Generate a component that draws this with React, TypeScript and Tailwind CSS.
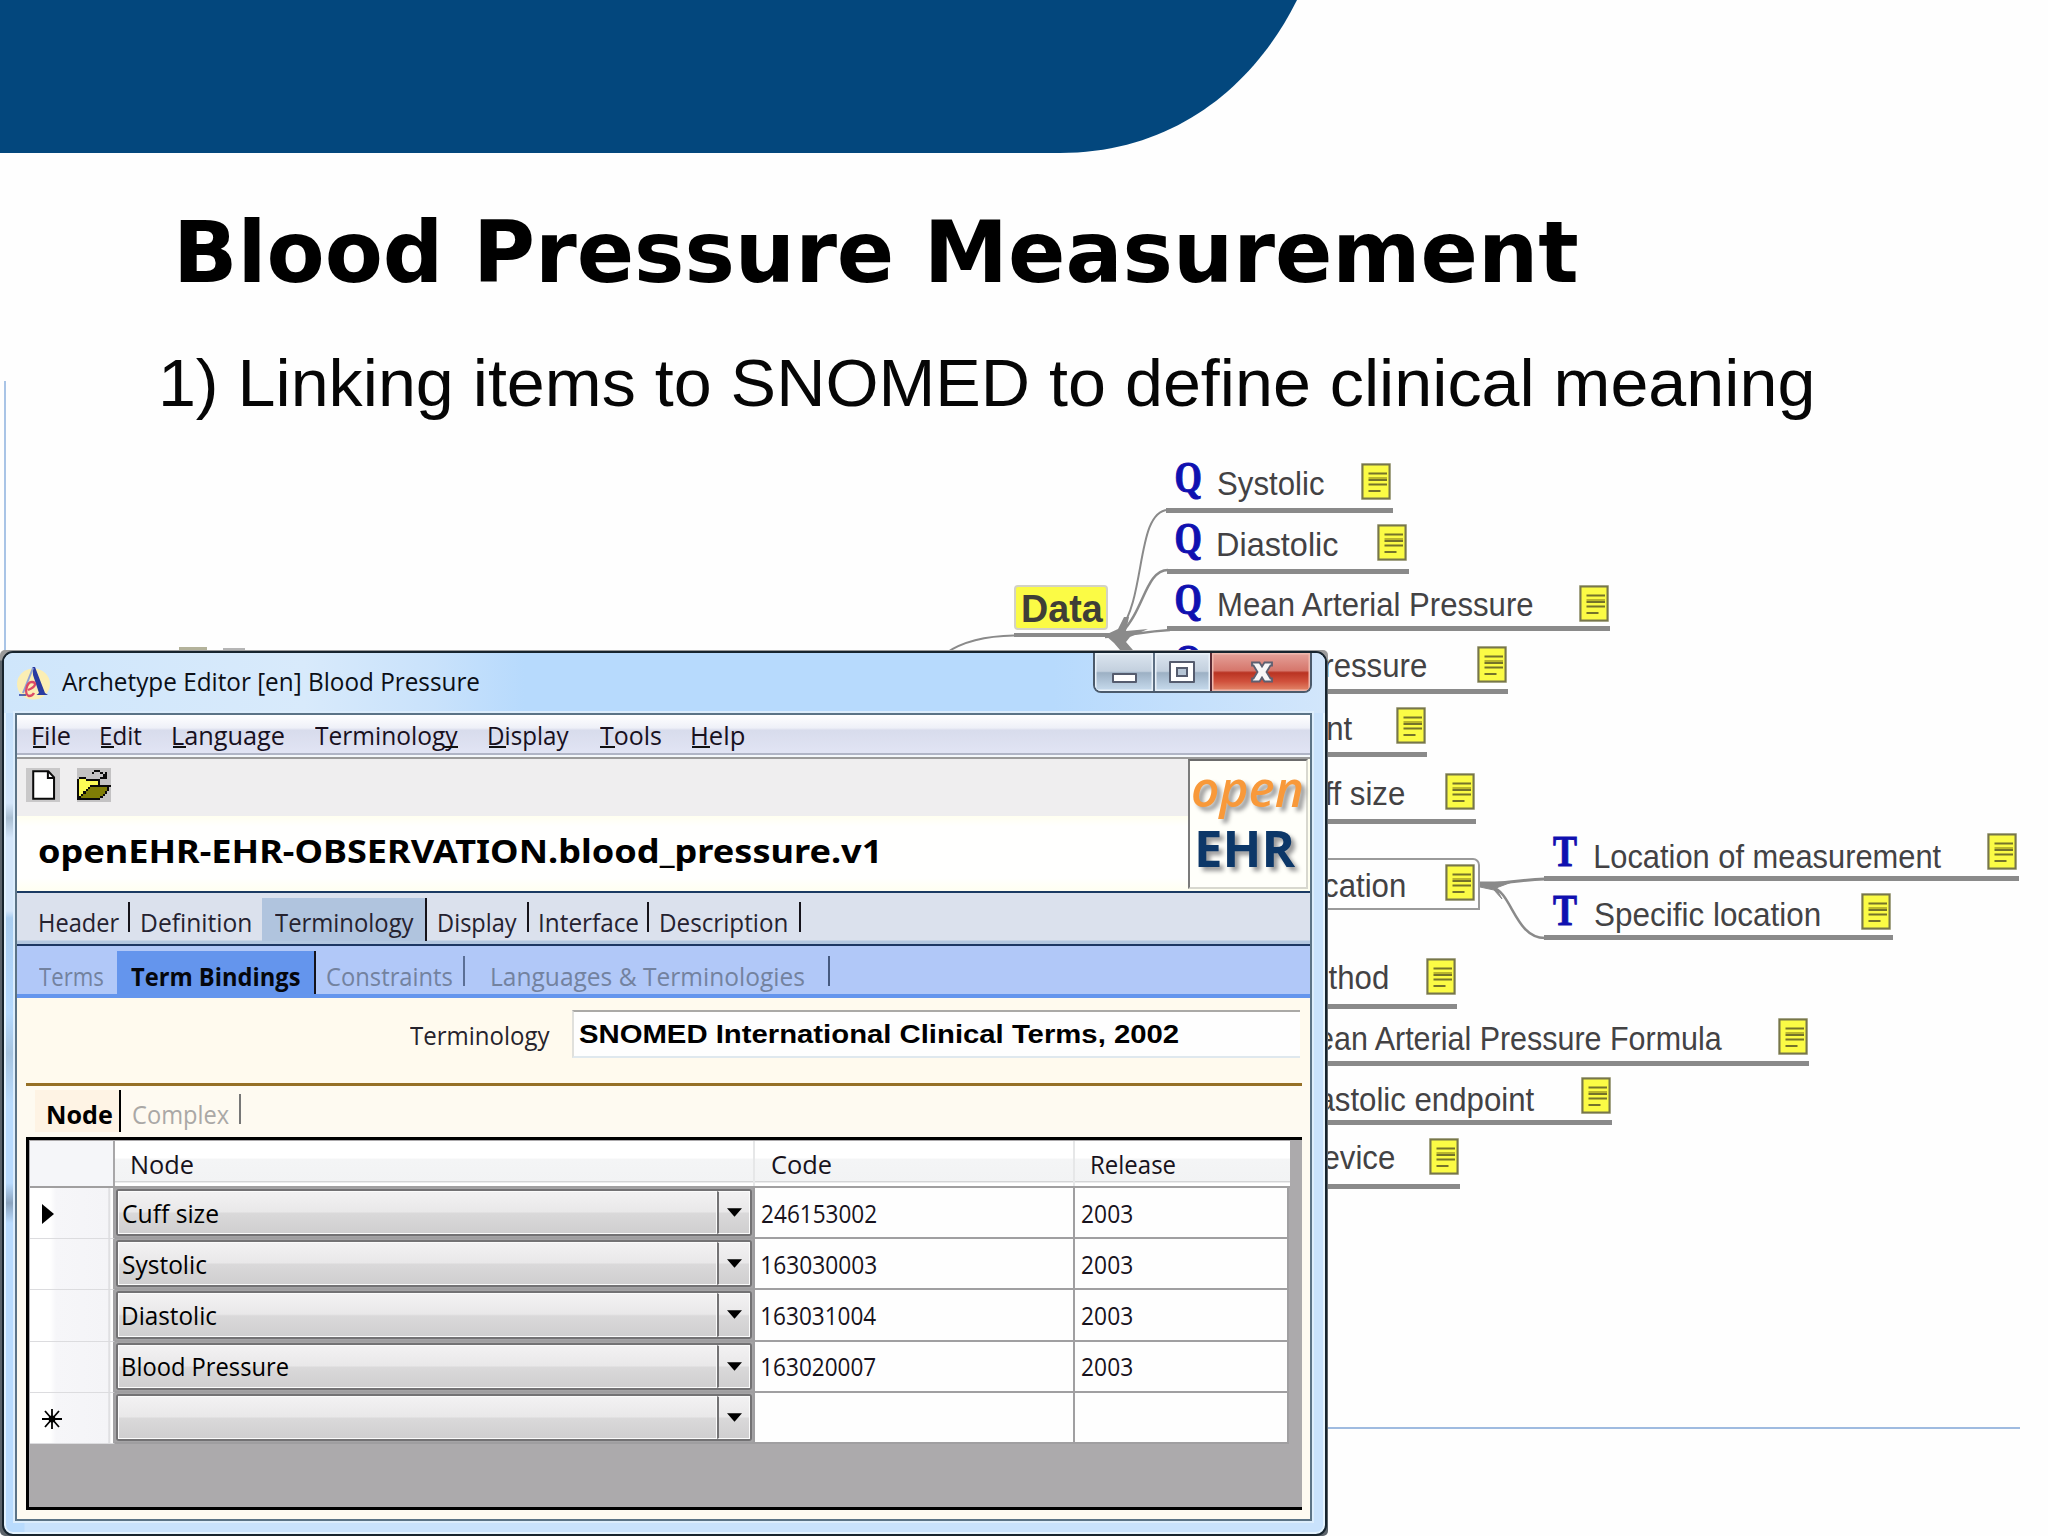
import React, { useLayoutEffect, useRef, useState } from "react";

/* Single line of text stretched horizontally so its ink spans `w` pixels.
   Without `w`, a fixed stretch is used and the ink ends at the box's left edge. */
function T({ children, w, className = "" }: { children: string; w?: number; className?: string }) {
  const ref = useRef<HTMLSpanElement>(null);
  const [m, setM] = useState("none");
  useLayoutEffect(() => {
    const el = ref.current;
    const ctx = document.createElement("canvas").getContext("2d");
    if (!el || !ctx) return;
    const cs = getComputedStyle(el);
    ctx.font = `${cs.fontStyle} ${cs.fontWeight} ${cs.fontSize} ${cs.fontFamily}`;
    const t = ctx.measureText(children);
    const l = -t.actualBoundingBoxLeft;
    const r = t.actualBoundingBoxRight;
    const s = w ? w / (r - l) : 0.945;
    const dx = w ? -l * s : -r * s;
    setM(`matrix(${s},0,0,1,${dx},0)`);
  }, [children, w]);
  return (
    <span className={`block shrink-0 whitespace-nowrap ${className}`} style={{ width: w ?? 0 }}>
      <span ref={ref} className="inline-block origin-top-left" style={{ transform: m }}>
        {children}
      </span>
    </span>
  );
}

function Note({ at }: { at: string }) {
  return (
    <svg className={`absolute h-[37px] w-[30px] ${at}`} viewBox="0 0 30 37">
      <rect x="0" y="0" width="30" height="37" fill="#d5d4c4" />
      <rect x="1.5" y="1.5" width="27" height="34" fill="#fbfb45" stroke="#77764a" strokeWidth="2" />
      <path d="M7.5 10.5H26M7.5 17H26M7.5 21.5H26M7.5 28H19.5" stroke="#75732a" strokeWidth="2.2" />
      <path d="M7.5 15H26" stroke="#b9b52c" strokeWidth="2" />
    </svg>
  );
}

const notes = [
  "left-[1361px] top-[463px]",
  "left-[1377px] top-[524px]",
  "left-[1579px] top-[585px]",
  "left-[1477px] top-[646px]",
  "left-[1396px] top-[707px]",
  "left-[1445px] top-[773px]",
  "left-[1445px] top-[864px]",
  "left-[1987px] top-[833px]",
  "left-[1861px] top-[893px]",
  "left-[1426px] top-[958px]",
  "left-[1778px] top-[1018px]",
  "left-[1581px] top-[1077px]",
  "left-[1429px] top-[1138px]",
];

const bars = [
  "left-[1166px] w-[227px] top-[508px]",
  "left-[1167px] w-[242px] top-[569px]",
  "left-[1167px] w-[443px] top-[626px]",
  "left-[1167px] w-[341px] top-[689px]",
  "left-[1167px] w-[260px] top-[752px]",
  "left-[1167px] w-[309px] top-[819px]",
  "left-[1544px] w-[475px] top-[876px]",
  "left-[1544px] w-[349px] top-[935px]",
  "left-[1167px] w-[290px] top-[1004px]",
  "left-[1167px] w-[642px] top-[1061px]",
  "left-[1167px] w-[445px] top-[1120px]",
  "left-[1167px] w-[293px] top-[1184px]",
];

const labels: { t: string; w?: number; at: string }[] = [
  { t: "Systolic", w: 106, at: "left-[1218px] top-[464px]" },
  { t: "Diastolic", w: 120, at: "left-[1218px] top-[525px]" },
  { t: "Mean Arterial Pressure", w: 315, at: "left-[1219px] top-[585px]" },
  { t: "ressure", at: "left-[1426px] top-[646px]" },
  { t: "nt", at: "left-[1352px] top-[709px]" },
  { t: "ff size", at: "left-[1404px] top-[774px]" },
  { t: "cation", at: "left-[1405px] top-[866px]" },
  { t: "Location of measurement", w: 346, at: "left-[1595px] top-[837px]" },
  { t: "Specific location", w: 225, at: "left-[1595px] top-[895px]" },
  { t: "ethod", at: "left-[1388px] top-[958px]" },
  { t: "ean Arterial Pressure Formula", w: 406, at: "left-[1318px] top-[1019px]" },
  { t: "astolic endpoint", at: "left-[1534px] top-[1080px]" },
  { t: "evice", at: "left-[1394px] top-[1138px]" },
];

function MindMap() {
  return (
    <>
      <svg className="absolute left-[930px] top-[490px] h-[200px] w-[260px]" viewBox="930 490 260 200" fill="none" stroke="#8a8a8a">
        <path d="M946 653C962 642 985 636 1014 635.5" strokeWidth="2" />
        <path d="M1120 630C1146 598 1136 511 1168 510" strokeWidth="2" />
        <path d="M1122 632C1144 610 1146 570 1168 570" strokeWidth="2.5" />
        <path d="M1105 637C1135 635 1140 632 1170 630" strokeWidth="2.5" />
        <path d="M1105 635L1118 629L1124 617L1129 617L1126 631L1148 629L1130 637L1126 642L1139 657H1126L1114 643Z" fill="#8a8a8a" stroke="none" />
      </svg>
      <div className="absolute left-[1014px] top-[633px] h-[4px] w-[95px] bg-[#8a8a8a]" />
      <div className="absolute left-[1014px] top-[585px] flex h-[45px] w-[94px] items-center rounded-[4px] border-2 border-[#d3d2c4] bg-[#fbfb45] pl-[7px] pt-[3px]">
        <T w={80} className="font-['Liberation_Sans',sans-serif] text-[39px] leading-[44px] font-bold text-[#3f3e37]">Data</T>
      </div>
      <svg className="absolute left-[1470px] top-[860px] h-[90px] w-[80px]" viewBox="1470 860 80 90" fill="none" stroke="#8a8a8a">
        <path d="M1480 884C1505 884 1515 880 1545 879" strokeWidth="3" />
        <path d="M1480 882L1512 882L1496 888L1502 899L1494 890L1480 887Z" fill="#8a8a8a" />
        <path d="M1492 887C1512 892 1515 938 1545 938" strokeWidth="2.5" />
      </svg>
      <div className="absolute left-[1167px] top-[858px] h-[52px] w-[313px] rounded-tr-[7px] border-2 border-[#9a9a9a]" />
      {bars.map((b) => (
        <div key={b} className={`absolute h-[5px] bg-[#8a8a8a] ${b}`} />
      ))}
      {["top-[455px]", "top-[516px]", "top-[577px]", "top-[638px]"].map((q) => (
        <div key={q} className={`absolute left-[1176px] ${q}`}>
          <T w={25} className="font-['Liberation_Serif',serif] text-[45px] leading-[45px] font-bold text-[#1010b0] [-webkit-text-stroke:1px_#1010b0]">Q</T>
        </div>
      ))}
      {["top-[829px]", "top-[888px]"].map((q) => (
        <div key={q} className={`absolute left-[1553px] ${q}`}>
          <T w={24} className="font-['Liberation_Serif',serif] text-[45px] leading-[45px] font-bold text-[#1010b0] [-webkit-text-stroke:1px_#1010b0]">T</T>
        </div>
      ))}
      {labels.map((l) => (
        <div key={l.t} className={`absolute ${l.at}`}>
          <T w={l.w} className="font-['Liberation_Sans',sans-serif] text-[33px] leading-[40px] text-[#434244]">{l.t}</T>
        </div>
      ))}
      {notes.map((n) => (
        <Note key={n} at={n} />
      ))}
    </>
  );
}

const folderRows = [
  "................",
  "........###.....",
  ".......#...#.#..",
  "............##..",
  ".###.......###..",
  "#yyy#######.....",
  "#yyyyyyyyy#.....",
  "#yyyyyyyyy#.....",
  "#yyyyy##########",
  "#yyyy#oooooooo#.",
  "#yyy#ooooooooo#.",
  "#yy#ooooooooo#..",
  "#y#ooooooooo#...",
  "##ooooooooo#....",
  "###########.....",
];

function FolderIcon() {
  return (
    <svg className="h-[34px] w-[34px] bg-[#c3c2c3]" viewBox="0 0 16 16" shapeRendering="crispEdges">
      {folderRows.flatMap((row, y) =>
        row.split("").map((c, x) =>
          c === "." ? null : (
            <rect key={`${x}-${y}`} x={x} y={y} width="1" height="1" fill={c === "#" ? "#0a0a0a" : c === "y" ? "#fbfb55" : "#7f7d05"} />
          )
        )
      )}
    </svg>
  );
}

function NewIcon() {
  return (
    <svg className="h-[34px] w-[34px] bg-[#c9c8c9]" viewBox="0 0 16 16">
      <path d="M3.4 1.5H10.5L13.2 4.4V14.5H3.4Z" fill="#fff" stroke="#0a0a0a" strokeWidth="0.95" />
      <path d="M10.3 1.5V4.7H13.3" fill="none" stroke="#0a0a0a" strokeWidth="0.95" />
    </svg>
  );
}

function AppIcon() {
  return (
    <svg className="h-[36px] w-[34px]" viewBox="0 0 34 36">
      <ellipse cx="17.5" cy="19" rx="16.5" ry="15.5" fill="#fbeeb4" />
      <path d="M16.5 2L19 2L29 28L32 30H20.5L23 28L17 10Z" fill="#2a3ba0" />
      <path d="M17 3L7 28" stroke="#8fa0d4" strokeWidth="2" />
      <path d="M3 30H10" stroke="#2a3ba0" strokeWidth="1.6" />
      <path d="M12 25C20 22 21 17 16 17C10 17 8 30 13 31C15 31 17 30 18 28" fill="none" stroke="#dc4a66" strokeWidth="2.4" />
    </svg>
  );
}

function Menu({ a, u, b = "", w, gap }: { a: string; u: string; b?: string; w: number; gap: string }) {
  const underline: Record<string, string> = {
    F: "left-0 w-[13px]",
    E: "left-0 w-[13px]",
    L: "left-0 w-[13px]",
    y: "right-0 w-[14px]",
    D: "left-0 w-[17px]",
    T: "left-0 w-[15px]",
    H: "left-0 w-[18px]",
  };
  return (
    <div className={`relative ${gap}`}>
      <T w={w}>{a + u + b}</T>
      <div className={`absolute top-[31px] h-[2px] bg-[#111] ${underline[u]}`} />
    </div>
  );
}

function Sep({ className }: { className: string }) {
  return <div className={`shrink-0 ${className}`} />;
}

const rows = [
  { n: "Cuff size", nw: 95, c: "246153002", mark: "arrow" },
  { n: "Systolic", nw: 84, c: "163030003", mark: "" },
  { n: "Diastolic", nw: 94, c: "163031004", mark: "" },
  { n: "Blood Pressure", nw: 165, c: "163020007", mark: "" },
  { n: "", nw: 0, c: "", mark: "star" },
];

function Grid() {
  return (
    <div className="ml-[9px] mt-[4px] h-[373px] w-[1276px] border-b-[3px] border-l-[3px] border-t-[3px] border-black bg-[#acaaac] pl-px pt-px">
      <div className="flex h-[47px] w-[1260px] border-b-2 border-[#a09fa0] bg-[linear-gradient(#ffffff_0%,#ffffff_38%,#f4f5f6_40%,#f2f3f4_88%,#d3d4d5_90%,#ffffff_94%)]">
        <div className="h-full w-[85px] border-r-2 border-[#a8a7a9] bg-[#f5f6f9]" />
        <div className="flex h-full w-[640px] items-center border-r-2 border-[#e6e7e8] pl-[17px]"><T w={61}>Node</T></div>
        <div className="flex h-full w-[320px] items-center border-r-2 border-[#e6e7e8] pl-[17px]"><T w={59}>Code</T></div>
        <div className="flex h-full flex-1 items-center pl-[17px]"><T w={83}>Release</T></div>
      </div>
      {rows.map((r) => (
        <div key={r.n} className="flex h-[51.2px] w-[1259px]">
          <div className="flex h-full w-[85px] items-center border-b border-r-2 border-b-[#dcdcdf] border-r-[#a3a2a4] bg-[linear-gradient(90deg,#fff_0,#fff_20px,#f6f6f9_26px,#f4f4f7_78px,#d5d5d8_79px,#fff_81px)] pl-[12px]">
            {r.mark === "arrow" && <svg className="mt-[2px] h-[20px] w-[12px]" viewBox="0 0 12 20"><path d="M0 0L12 10L0 20Z" /></svg>}
            {r.mark === "star" && (
              <svg className="mt-[3px] h-[20px] w-[20px]" viewBox="0 0 20 20" stroke="#000" strokeWidth="1.8">
                <path d="M10 0V20M0 10H20M3 2L17 18M17 2L3 18" />
                <circle cx="10" cy="10" r="2.5" />
              </svg>
            )}
          </div>
          <div className="h-full w-[640px] border-b-2 border-r-2 border-[#9f9ea0] bg-[#a5a4a6] p-px">
            <div className="flex h-full w-full rounded-[3px] border-2 border-[#737274] bg-[linear-gradient(#f3f2f3_0%,#e9e8e9_48%,#dad9da_52%,#cfcecf_100%)] text-black">
              <div className="flex h-full flex-1 items-center border border-[#fbfbfb] pl-[4px]">{r.n && <T w={r.nw}>{r.n}</T>}</div>
              <div className="flex h-full w-[33px] items-center justify-center border border-l-2 border-[#fbfbfb] border-l-[#737274]">
                <svg className="h-[9px] w-[15px]" viewBox="0 0 16 9"><path d="M0 0H16L8 9Z" /></svg>
              </div>
            </div>
          </div>
          <div className="flex h-full w-[320px] items-center border-b-2 border-r-2 border-[#a09fa1] bg-[#fefefe] pl-[7px]">{r.c && <T w={114}>{r.c}</T>}</div>
          <div className="flex h-full flex-1 items-center border-b-2 border-r-2 border-[#a09fa1] bg-[#fefefe] pl-[7px]">{r.c && <T w={50}>2003</T>}</div>
        </div>
      ))}
    </div>
  );
}

function EditorWindow() {
  return (
    <div className="absolute left-0 top-[650px] h-[886px] w-[1328px] bg-[linear-gradient(#9b9b9b_0,#9b9b9b_10px,#5b636a_11px,#5b636a_100%)] [clip-path:inset(0_round_5px)]">
      <div className="ml-[2px] mt-px flex h-[885px] w-[1325px] flex-col rounded-[11px] border-2 border-[#17242e] bg-[linear-gradient(90deg,transparent_20px,#c9e2fc_21px),linear-gradient(#b9dbfd_0,#cde4fb_120px,#d4e6fa_150px,#a9bfd2_165px,#d4e6fa_185px,#d4e6fa_258px,#a9cdf0_265px,#b5d9fe_360px,#a6c4e0_400px,#b9dbfd_450px,#b9dbfd_530px,#8aa3bd_550px,#b9dbfd_570px,#b9dbfd_100%)] shadow-[inset_0_0_0_2px_#e4f3fe]">
        <div className="flex h-[60px] shrink-0 items-start rounded-t-[9px] bg-[linear-gradient(90deg,#cfe6fb_0,#d8eafb_300px,#c9e2fb_430px,#b7dafd_520px,#b7dafd_1050px,#d2e6fb_1321px)] pl-[12px]">
          <div className="mt-[12px]"><AppIcon /></div>
          <T w={417} className="ml-[12px] mt-[8px] font-['Open_Sans',sans-serif] text-[25px] leading-[40px] text-[#0b0f16]">Archetype Editor [en] Blood Pressure</T>
          <div className="ml-[614px] flex h-[40px] w-[219px] overflow-hidden rounded-b-[8px] border-2 border-t-0 border-[#4b5a6b]">
            <div className="flex w-[60px] items-center justify-center border-r-2 border-[#5d6f83] bg-[linear-gradient(#dbe5ef_0%,#c3d0de_48%,#9cb0c4_52%,#c8dcee_100%)] pt-[12px] shadow-[inset_0_0_0_1.5px_#e9f1f8]">
              <div className="h-[10px] w-[25px] rounded-[1px] border-2 border-[#555c6e] bg-white" />
            </div>
            <div className="flex w-[57px] items-center justify-center border-r-2 border-[#5b2b35] bg-[linear-gradient(#dbe5ef_0%,#c3d0de_48%,#9cb0c4_52%,#c8dcee_100%)] pr-px shadow-[inset_0_0_0_1.5px_#e9f1f8]">
              <div className="flex h-[22px] w-[26px] items-center justify-center rounded-[1px] border-2 border-[#555c6e] bg-white">
                <div className="h-[10px] w-[12px] border-2 border-[#555c6e] bg-[#b5c5d5]" />
              </div>
            </div>
            <div className="flex flex-1 items-center justify-center bg-[linear-gradient(#e5a29a_0%,#d6776c_46%,#b93322_52%,#d0513c_75%,#e48a6c_100%)] pl-[2px] shadow-[inset_0_0_0_1.5px_#efb9ae]">
              <svg className="h-[22px] w-[24px]" viewBox="0 0 24 22">
                <path d="M2 1.5H9.5L12 5.5L14.5 1.5H22V4.5H20.5L16.5 11L20.5 17.5H22V20.5H14.5L12 16.5L9.5 20.5H2V17.5H3.5L7.5 11L3.5 4.5H2Z" fill="#f8f6f7" stroke="#5d5f70" strokeWidth="1.8" />
              </svg>
            </div>
          </div>
        </div>
        <div className="ml-[11px] flex h-[808px] w-[1297px] flex-col border-2 border-[#5b7386] bg-[#fefaf1] font-['Open_Sans',sans-serif] text-[25px] leading-[40px] text-[#17121c] shadow-[0_0_0_2px_#dcedfc]">
          <div className="flex h-[40px] shrink-0 items-center border-b-2 border-[#b0b5c6] bg-[linear-gradient(#ffffff_0%,#eef0f8_34%,#d8dcec_40%,#e1e4f4_100%)] pl-[16px] pt-[2px] text-[#18101e]">
            <Menu a="" u="F" b="ile" w={37} gap="" />
            <Menu a="" u="E" b="dit" w={41} gap="ml-[31px]" />
            <Menu a="" u="L" b="anguage" w={111} gap="ml-[31px]" />
            <Menu a="Terminolog" u="y" w={143} gap="ml-[31px]" />
            <Menu a="" u="D" b="isplay" w={80} gap="ml-[31px]" />
            <Menu a="" u="T" b="ools" w={61} gap="ml-[31px]" />
            <Menu a="" u="H" b="elp" w={52} gap="ml-[31px]" />
          </div>
          <div className="h-[4px] shrink-0 border-b-2 border-[#9b9b9b] bg-[#f4f8fb]" />
          <div className="flex h-[134px] shrink-0 border-b-2 border-[#1b3a63] bg-[#fffff0]">
            <div className="flex flex-1 flex-col">
              <div className="flex h-[57px] shrink-0 items-start gap-[17px] bg-[#efeeef] pl-[9px] pt-[9px]">
                <NewIcon />
                <FolderIcon />
              </div>
              <div className="flex flex-1 items-center bg-[linear-gradient(#fffff0_0,#fffffe_10px,#fffffe_62px,#fffff0_76px)] pb-[6px] pl-[22px]">
                <T w={838} className="font-['Noto_Sans',sans-serif] text-[33px] font-bold text-black">openEHR-EHR-OBSERVATION.blood_pressure.v1</T>
              </div>
            </div>
            <div className="mr-[2px] h-[130px] w-[120px] border-2 border-b-[#d8d8cf] border-l-[#7b7b7b] border-r-[#d8d8cf] border-t-[#6b6b6b] bg-[#fffffa] pl-[3px]">
              <T w={109} className="h-[56px] font-['Open_Sans',sans-serif] text-[49px] leading-[54px] font-semibold italic text-[#f8993a] [text-shadow:4px_4px_4px_#9a9a9a]">open</T>
              <T w={98} className="ml-[5px] h-[60px] font-['Open_Sans',sans-serif] text-[50px] leading-[62px] font-bold text-[#0c3768] [text-shadow:4px_4px_4px_#9a9a9a]">EHR</T>
            </div>
          </div>
          <div className="flex h-[53px] shrink-0 items-start border-b-2 border-[#1d3763] bg-[linear-gradient(#dbe1ed_0,#dbe1ed_47px,#b3c7e0_48px)] pl-[23px] text-[#252230]">
            <T w={79} className="mt-[9px]">Header</T>
            <Sep className="ml-[9px] mt-[9px] h-[30px] w-[2px] bg-[#15131a]" />
            <T w={109} className="ml-[12px] mt-[9px]">Definition</T>
            <div className="ml-[11px] mt-[5px] flex h-[43px] w-[165px] border-r-2 border-[#15131a] bg-[#b0c4de] pl-[13px] pt-[4px]">
              <T w={139}>Terminology</T>
            </div>
            <T w={78} className="ml-[12px] mt-[9px]">Display</T>
            <Sep className="ml-[10px] mt-[9px] h-[30px] w-[2px] bg-[#15131a]" />
            <T w={98} className="ml-[11px] mt-[9px]">Interface</T>
            <Sep className="ml-[9px] mt-[9px] h-[30px] w-[2px] bg-[#15131a]" />
            <T w={126} className="ml-[12px] mt-[9px]">Description</T>
            <Sep className="ml-[12px] mt-[9px] h-[30px] w-[2px] bg-[#15131a]" />
          </div>
          <div className="flex h-[52px] shrink-0 items-start border-b-4 border-[#6495ed] bg-[#b1c8f8] pl-[22px] text-[#73829f]">
            <T w={64} className="mt-[10px]">Terms</T>
            <div className="ml-[14px] mt-[5px] flex h-[43px] w-[199px] border-r-2 border-[#15131a] bg-[#6495ed] pl-[14px] pt-[5px]">
              <T w={169} className="font-bold text-[#05070c]">Term Bindings</T>
            </div>
            <T w={125} className="ml-[11px] mt-[10px]">Constraints</T>
            <Sep className="ml-[11px] mt-[10px] h-[30px] w-[2px] bg-[#5b6f96]" />
            <T w={312} className="ml-[27px] mt-[10px]">Languages &amp; Terminologies</T>
            <Sep className="ml-[24px] mt-[10px] h-[30px] w-[2px] bg-[#465a80]" />
          </div>
          <div className="flex h-[85px] shrink-0 items-start bg-[#fffaee] pt-[12px]">
            <T w={140} className="ml-[393px] mt-[5px] text-[#26232c]">Terminology</T>
            <div className="ml-[22px] flex h-[48px] w-[728px] items-center border-b-2 border-l-2 border-t-2 border-b-[#dfe8ee] border-l-[#e0e0dc] border-t-[#aaa9a6] bg-[#fefefe] pb-[1px] pl-[5px]">
              <T w={599} className="font-['Liberation_Sans',sans-serif] font-bold text-black">SNOMED International Clinical Terms, 2002</T>
            </div>
          </div>
          <div className="ml-[9px] h-[3px] w-[1276px] shrink-0 bg-[#967026]" />
          <div className="flex h-[47px] shrink-0 items-start pl-[18px]">
            <div className="mt-[4px] flex h-[42px] w-[86px] border-r-2 border-black bg-[#fef3e4] pl-[13px] pt-[4px]">
              <T w={64} className="font-bold text-black">Node</T>
            </div>
            <T w={96} className="ml-[12px] mt-[8px] text-[#aaa8a6]">Complex</T>
            <Sep className="ml-[10px] mt-[8px] h-[30px] w-[2px] bg-[#777]" />
          </div>
          <Grid />
        </div>
      </div>
    </div>
  );
}

export default function App() {
  return (
    <div className="relative h-[1536px] w-[2048px] overflow-hidden bg-[#fefefe]">
      <svg className="block h-[155px] w-[1320px]" viewBox="0 0 1320 155">
        <path d="M0 0H1297C1255 85 1175 153 1060 153H0Z" fill="#03477d" />
      </svg>
      <h1 className="ml-[180px] mt-[48px]">
        <T w={1397} className="font-['DejaVu_Sans',sans-serif] text-[85px] leading-[100px] font-bold text-black">Blood Pressure Measurement</T>
      </h1>
      <p className="ml-[163px] mt-[40px]">
        <T w={1648} className="font-['Liberation_Sans',sans-serif] text-[67px] leading-[80px] text-[#060606]">1) Linking items to SNOMED to define clinical meaning</T>
      </p>
      <div className="absolute left-[4px] top-[381px] h-[275px] w-[2px] bg-[#a9c4e6]" />
      <div className="absolute left-[1320px] top-[1427px] h-[2px] w-[700px] bg-[#9fbbe0]" />
      <div className="absolute left-[179px] top-[647px] h-[4px] w-[28px] bg-[#b3b29a]" />
      <div className="absolute left-[223px] top-[648px] h-[3px] w-[22px] bg-[#b5b5b5]" />
      <MindMap />
      <EditorWindow />
    </div>
  );
}
